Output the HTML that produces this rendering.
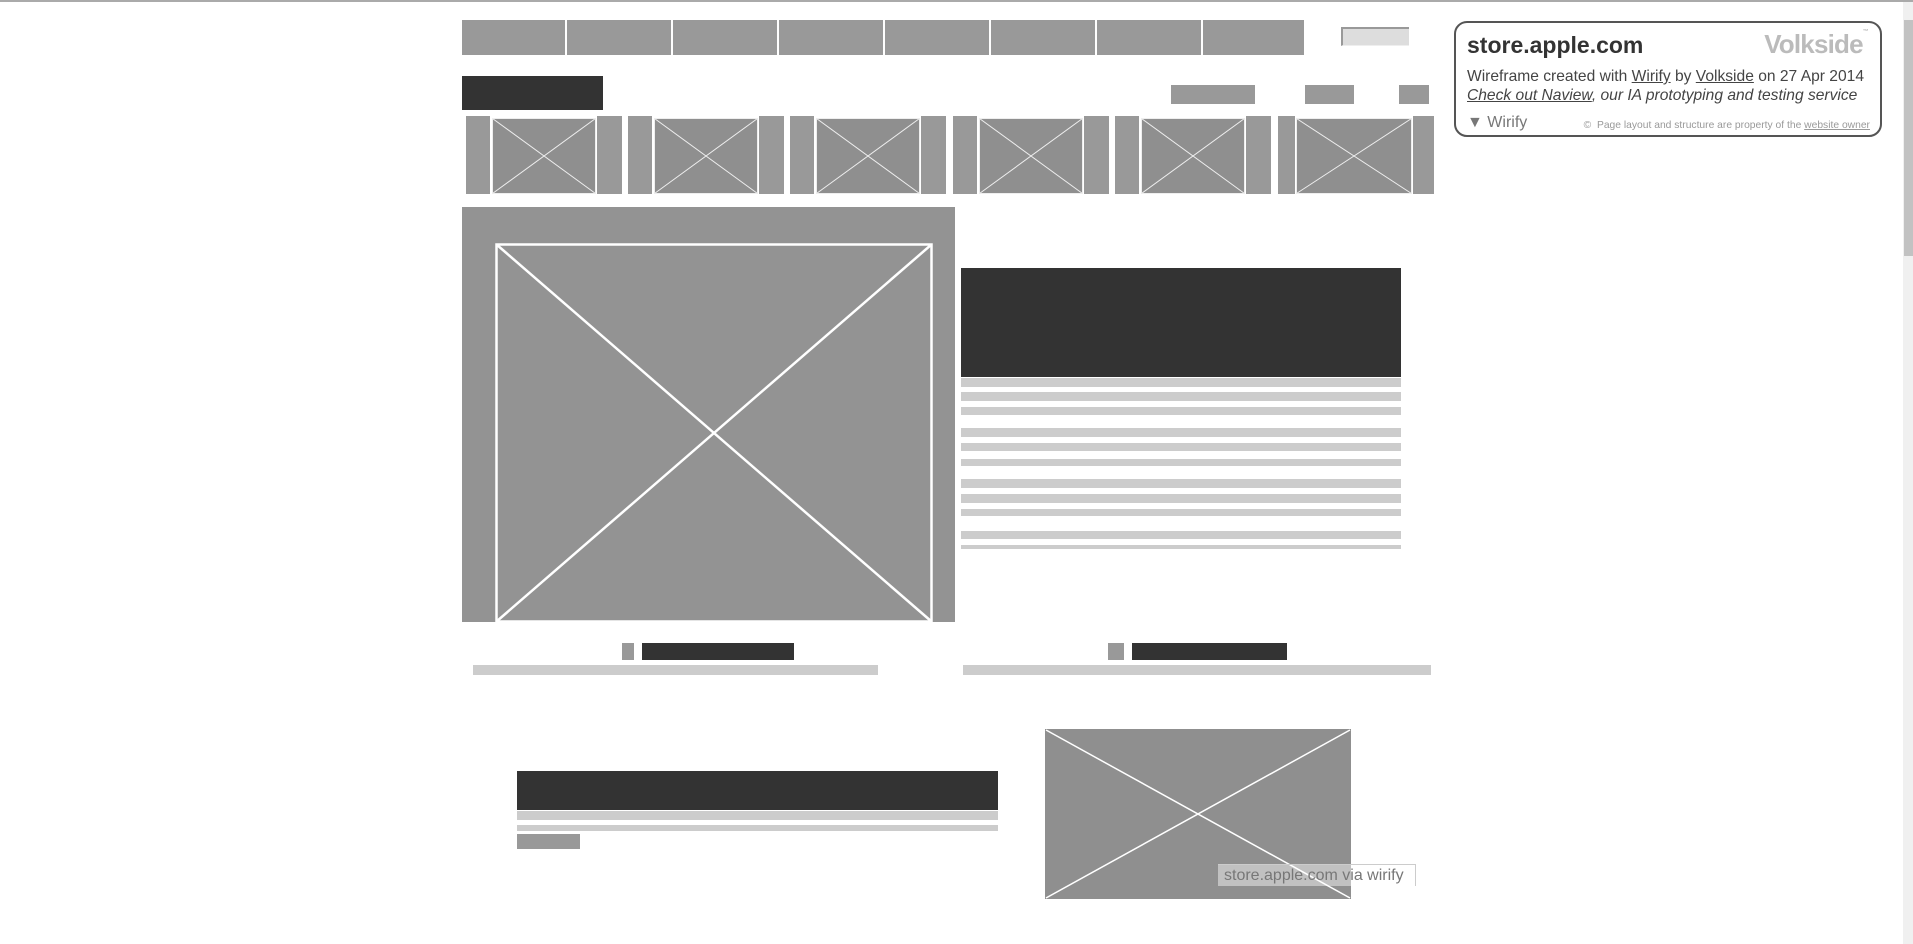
<!DOCTYPE html>
<html><head><meta charset="utf-8"><style>
*{margin:0;padding:0;box-sizing:border-box}
body{width:1913px;height:944px;background:#fff;position:relative;overflow:hidden;font-family:"Liberation Sans",sans-serif}
div,svg{position:absolute}
.g{background:#999}
.d{background:#333}
.l{background:#ccc}
</style></head><body>
<div style="left:0;top:0;width:1913px;height:2px;background:#aaa"></div>
<div class="g" style="left:462px;top:20px;width:103px;height:35px"></div>
<div class="g" style="left:567px;top:20px;width:104px;height:35px"></div>
<div class="g" style="left:673px;top:20px;width:104px;height:35px"></div>
<div class="g" style="left:779px;top:20px;width:104px;height:35px"></div>
<div class="g" style="left:885px;top:20px;width:104px;height:35px"></div>
<div class="g" style="left:991px;top:20px;width:104px;height:35px"></div>
<div class="g" style="left:1097px;top:20px;width:104px;height:35px"></div>
<div class="g" style="left:1203px;top:20px;width:101px;height:35px"></div>
<div style="left:1341px;top:27px;width:68px;height:19px;background:#ddd;border-top:2px solid #999;border-left:2px solid #999;border-bottom:1px solid #eee"></div>
<div class="d" style="left:462px;top:76px;width:141px;height:34px"></div>
<div class="g" style="left:1171px;top:85px;width:84px;height:19px"></div>
<div class="g" style="left:1305px;top:85px;width:49px;height:19px"></div>
<div class="g" style="left:1399px;top:85px;width:30px;height:19px"></div>
<svg style="left:460px;top:114px" width="980" height="84">
<g fill="#999">
<rect x="6" y="2" width="24" height="78"/><rect x="137" y="2" width="25" height="78"/>
<rect x="168" y="2" width="24" height="78"/><rect x="299" y="2" width="25" height="78"/>
<rect x="330" y="2" width="24" height="78"/><rect x="461" y="2" width="25" height="78"/>
<rect x="493" y="2" width="24" height="78"/><rect x="624" y="2" width="25" height="78"/>
<rect x="655" y="2" width="24" height="78"/><rect x="786" y="2" width="25" height="78"/>
<rect x="818" y="2" width="17" height="78"/><rect x="953" y="2" width="21" height="78"/>
</g>
<g fill="#8f8f8f" stroke="#eee" stroke-width="1">
<rect x="32.5" y="4.5" width="103" height="75"/><path d="M32.5 4.5L135.5 79.5M135.5 4.5L32.5 79.5"/>
<rect x="194.5" y="4.5" width="103" height="75"/><path d="M194.5 4.5L297.5 79.5M297.5 4.5L194.5 79.5"/>
<rect x="356.5" y="4.5" width="103" height="75"/><path d="M356.5 4.5L459.5 79.5M459.5 4.5L356.5 79.5"/>
<rect x="519.5" y="4.5" width="103" height="75"/><path d="M519.5 4.5L622.5 79.5M622.5 4.5L519.5 79.5"/>
<rect x="681.5" y="4.5" width="103" height="75"/><path d="M681.5 4.5L784.5 79.5M784.5 4.5L681.5 79.5"/>
<rect x="836.5" y="4.5" width="115" height="75"/><path d="M836.5 4.5L951.5 79.5M951.5 4.5L836.5 79.5"/>
</g></svg>
<div style="left:462px;top:207px;width:493px;height:415px;background:#939393"></div>
<svg style="left:495px;top:243px" width="438" height="380"><rect x="1.5" y="1.5" width="435" height="377" fill="#939393" stroke="#fff" stroke-width="2.5"/><path d="M1.5 1.5L436.5 378.5M436.5 1.5L1.5 378.5" stroke="#fff" stroke-width="2.5"/></svg>
<div class="d" style="left:961px;top:268px;width:440px;height:109px"></div>
<div class="l" style="left:961px;top:378px;width:440px;height:9px"></div>
<div class="l" style="left:961px;top:392px;width:440px;height:9px"></div>
<div class="l" style="left:961px;top:407px;width:440px;height:8px"></div>
<div class="l" style="left:961px;top:428px;width:440px;height:9px"></div>
<div class="l" style="left:961px;top:443px;width:440px;height:8px"></div>
<div class="l" style="left:961px;top:459px;width:440px;height:7px"></div>
<div class="l" style="left:961px;top:479px;width:440px;height:9px"></div>
<div class="l" style="left:961px;top:494px;width:440px;height:9px"></div>
<div class="l" style="left:961px;top:509px;width:440px;height:7px"></div>
<div class="l" style="left:961px;top:531px;width:440px;height:8px"></div>
<div class="l" style="left:961px;top:545px;width:440px;height:4px"></div>
<div class="g" style="left:622px;top:643px;width:12px;height:17px"></div>
<div class="d" style="left:642px;top:643px;width:152px;height:17px"></div>
<div class="l" style="left:473px;top:665px;width:405px;height:10px"></div>
<div class="g" style="left:1108px;top:643px;width:16px;height:17px"></div>
<div class="d" style="left:1132px;top:643px;width:155px;height:17px"></div>
<div class="l" style="left:963px;top:665px;width:468px;height:10px"></div>
<div class="d" style="left:517px;top:771px;width:481px;height:39px"></div>
<div class="l" style="left:517px;top:811px;width:481px;height:9px"></div>
<div class="l" style="left:517px;top:825px;width:481px;height:6px"></div>
<div class="g" style="left:517px;top:834px;width:63px;height:15px"></div>
<svg style="left:1045px;top:729px" width="306" height="170"><rect x="0" y="0" width="306" height="170" fill="#8f8f8f"/><path d="M1 1L305 169M305 1L1 169" stroke="#fff" stroke-width="1.5"/></svg>
<div style="left:1218px;top:864px;width:198px;height:22px;background:rgba(255,255,255,0.45);border-top:1px solid #ccc;border-right:1px solid #ccc;color:#777;font-size:16px;line-height:21px;padding-left:6px">store.apple.com via wirify</div>
<div style="left:1454px;top:21px;width:428px;height:116px;border:2px solid #555;border-radius:13px;background:#fff">
<div style="left:11px;top:9px;font-size:23px;font-weight:bold;color:#333">store.apple.com</div>
<div style="right:12px;top:6px;font-size:26px;font-weight:bold;color:#bbb;letter-spacing:-0.8px">Volkside<span style="font-size:6px;vertical-align:top">™</span></div>
<div style="left:11px;top:45px;font-size:15.6px;color:#444;white-space:nowrap">Wireframe created with <u>Wirify</u> by <u>Volkside</u> on 27 Apr 2014</div>
<div style="left:11px;top:64px;font-size:15.6px;color:#444;font-style:italic;white-space:nowrap"><u>Check out Naview</u>, our IA prototyping and testing service</div>
<div style="left:11px;top:91px;font-size:16px;color:#777">▼ Wirify</div>
<div style="right:10px;top:97px;font-size:10.3px;color:#999;white-space:nowrap">©&nbsp; Page layout and structure are property of the <u>website owner</u></div>
</div>
<div style="left:1903px;top:2px;width:10px;height:942px;background:#f0f0f0"></div>
<div style="left:1904px;top:20px;width:9px;height:236px;background:#c2c2c2"></div>
</body></html>
